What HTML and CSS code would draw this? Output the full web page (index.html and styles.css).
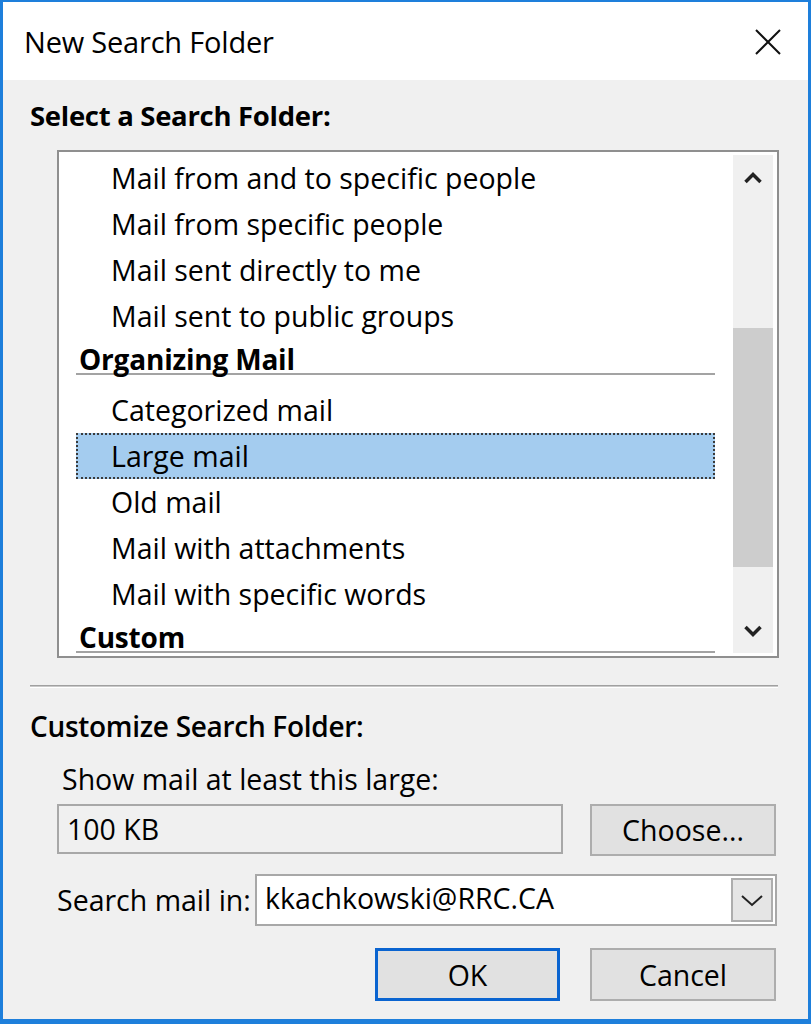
FILE: index.html
```html
<!DOCTYPE html>
<html>
<head>
<meta charset="utf-8">
<link rel="stylesheet" href="styles.css">
</head>
<body>
<div class="window">
  <div class="titlebar">
    <span class="title">New Search Folder</span>
    <svg class="close" width="28" height="28" viewBox="0 0 28 28"><path d="M2 2 L26 26 M26 2 L2 26" stroke="#111" stroke-width="2" fill="none"/></svg>
  </div>
  <div class="body">
    <div class="heading">Select a Search Folder:</div>
    <div class="listbox">
      <div class="list">
        <div class="item">Mail from and to specific people</div>
        <div class="item">Mail from specific people</div>
        <div class="item">Mail sent directly to me</div>
        <div class="item">Mail sent to public groups</div>
        <div class="group"><span class="group-name">Organizing Mail</span></div>
        <div class="item">Categorized mail</div>
        <div class="item selected">Large mail</div>
        <div class="item">Old mail</div>
        <div class="item">Mail with attachments</div>
        <div class="item">Mail with specific words</div>
        <div class="group"><span class="group-name">Custom</span></div>
      </div>
      <div class="scrollbar">
        <div class="sb-btn"><svg width="20" height="14" viewBox="0 0 20 14"><path d="M2.5 11 L10 3.5 L17.5 11" stroke="#222" stroke-width="3.5" fill="none"/></svg></div>
        <div class="sb-gap"></div>
        <div class="sb-thumb"></div>
        <div class="sb-fill"></div>
        <div class="sb-btn"><svg width="20" height="14" viewBox="0 0 20 14"><path d="M2.5 3 L10 10.5 L17.5 3" stroke="#222" stroke-width="3.5" fill="none"/></svg></div>
      </div>
    </div>
    <div class="divider"></div>
    <div class="heading sub">Customize Search Folder:</div>
    <div class="label indent">Show mail at least this large:</div>
    <div class="row size-row">
      <div class="textbox">100 KB</div>
      <div class="button">Choose...</div>
    </div>
    <div class="row search-row">
      <span class="label">Search mail in:</span>
      <div class="combo">
        <span class="combo-value">kkachkowski@RRC.CA</span>
        <div class="combo-btn"><svg width="24" height="14" viewBox="0 0 24 14"><path d="M2 3 L12 12 L22 3" stroke="#222" stroke-width="2" fill="none"/></svg></div>
      </div>
    </div>
    <div class="row buttons">
      <div class="button default">OK</div>
      <div class="button">Cancel</div>
    </div>
  </div>
</div>
</body>
</html>
```
FILE: styles.css
```css
* { box-sizing: border-box; }
html, body { margin: 0; padding: 0; }
body {
  font-family: "Open Sans", "Noto Sans", sans-serif;
  color: #000;
  background: #f0f0f0;
}
.window {
  width: 811px;
  height: 1024px;
  border-style: solid;
  border-color: #1e7fdb;
  border-width: 2px 3px 5px 3px;
  display: flex;
  flex-direction: column;
  background: #f0f0f0;
}
.titlebar {
  height: 78px;
  background: #fff;
  display: flex;
  align-items: center;
  justify-content: space-between;
  padding: 0 26px 0 21px;
}
.title {
  font-size: 29px;
  letter-spacing: -0.2px;
}
.close { display: block; margin-top: 2px; }
.body {
  flex: 1;
  padding: 18px 30px 0 27px;
  font-size: 28.5px;
}
.heading {
  font-weight: 700;
  font-size: 27.5px;
  letter-spacing: -0.3px;
  line-height: 36px;
  height: 36px;
}
.heading.sub { margin-top: 20px; font-weight: 600; font-size: 28px; }
.listbox {
  margin: 16px 0 0 27px;
  height: 508px;
  width: 722px;
  border: 2px solid #8f8f8f;
  background: #fff;
  display: flex;
}
.list {
  flex: 1;
  height: 504px;
  overflow: hidden;
  padding: 3px 18px 0 17px;
}
.item {
  height: 46px;
  line-height: 44px;
  padding-left: 34px;
  border: 1px solid transparent;
  white-space: nowrap;
}
.item.selected {
  background: #a4ccef;
  border: 2px dotted #3a3a3a;
  padding-left: 33px;
  line-height: 42px;
}
.group {
  height: 48px;
}
.group-name {
  display: block;
  line-height: 40px;
  font-weight: 700;
  font-size: 28px;
  letter-spacing: -0.2px;
  padding-left: 3px;
  border-bottom: 2px solid #a3a3a3;
  box-sizing: content-box;
  height: 34px;
}
.scrollbar {
  width: 40px;
  margin: 3px 4px 3px 0;
  background: #f0f0f0;
  display: flex;
  flex-direction: column;
}
.sb-btn {
  height: 45px;
  display: flex;
  align-items: center;
  justify-content: center;
}
.sb-gap { height: 128px; }
.sb-thumb { height: 239px; background: #cdcdcd; }
.sb-fill { flex: 1; }
.divider {
  margin-top: 27px;
  box-sizing: content-box;
  height: 1px;
  border-top: 1px solid #a0a0a0;
  border-bottom: 1px solid #fff;
  background: #c8c8c8;
}
.label {
  line-height: 36px;
  white-space: nowrap;
}
.label.indent {
  margin-top: 17px;
  padding-left: 32px;
}
.row { display: flex; align-items: center; }
.size-row { margin-top: 7px; margin-left: 27px; align-items: flex-start; }
.textbox {
  width: 506px;
  height: 50px;
  border: 2px solid #a8a8a8;
  line-height: 46px;
  padding-left: 8px;
  background: #f0f0f0;
}
.button {
  width: 186px;
  height: 52px;
  border: 2px solid #adadad;
  background: #e1e1e1;
  display: flex;
  align-items: center;
  justify-content: center;
}
.size-row .button { margin-left: 27px; }
.search-row { margin-top: 18px; margin-left: 27px; }
.search-row .label { width: 198px; }
.combo {
  width: 522px;
  height: 52px;
  border: 2px solid #a8a8a8;
  background: #fff;
  display: flex;
  align-items: center;
  justify-content: space-between;
  padding: 0 2px 0 8px;
}
.combo-value { line-height: 46px; margin-top: -4px; }
.combo-btn {
  width: 42px;
  height: 44px;
  background: #e5e5e5;
  border: 2px solid #adadad;
  display: flex;
  align-items: center;
  justify-content: center;
}
.buttons {
  margin-top: 22px;
  justify-content: flex-end;
  gap: 30px;
  padding-right: 2px;
}
.buttons .button { width: 186px; height: 53px; }
.button.default { border: 3px solid #0a64d0; width: 185px; }
```
